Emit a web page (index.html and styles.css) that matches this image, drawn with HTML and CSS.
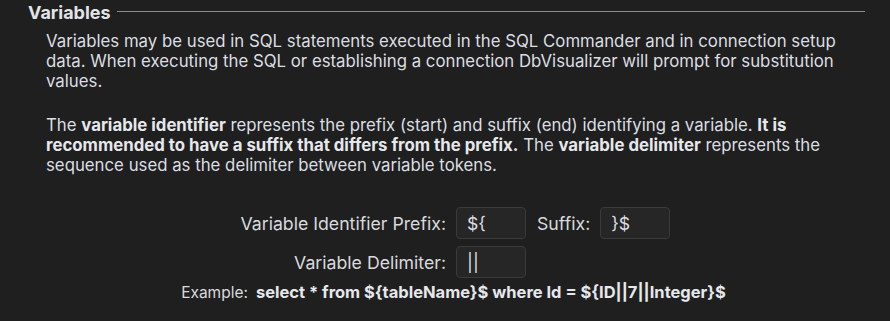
FILE: index.html
```html
<!DOCTYPE html>
<html lang="en">
<head>
    <meta charset="UTF-8">
    <title>Variables</title>
    <link rel="stylesheet" href="styles.css">
</head>
<body>
    <section class="group">
        <div class="group-title">
            <h2>Variables</h2>
            <span class="rule"></span>
        </div>

        <div class="group-body">
            <p>Variables may be used in SQL statements executed in the SQL Commander and in connection setup data. When executing the SQL or establishing a connection DbVisualizer will prompt for substitution values.</p>

            <p>The <b>variable identifier</b> represents the prefix (start) and suffix (end) identifying a variable. <b>It is recommended to have a suffix that differs from the prefix.</b> The <b>variable delimiter</b> represents the sequence used as the delimiter between variable tokens.</p>
        </div>

        <div class="var-form">
            <label class="field-label" for="prefix">Variable Identifier Prefix:</label>
            <input class="field" id="prefix" type="text" value="${">
            <label class="field-label suffix-label" for="suffix">Suffix:</label>
            <input class="field" id="suffix" type="text" value="}$">

            <label class="field-label" for="delim">Variable Delimiter:</label>
            <input class="field" id="delim" type="text" value="||">
        </div>

        <div class="example">
            <span class="example-label">Example:</span><b>select * from ${tableName}$ where Id = ${ID||7||Integer}$</b>
        </div>
    </section>
</body>
</html>
```

FILE: styles.css
```css
* {
    margin: 0;
    padding: 0;
    box-sizing: border-box;
}

body {
    background-color: #1f1f1f;
    color: #dcdee2;
    font-family: Inter, "Noto Sans", sans-serif;
    font-size: 16.8px;
    width: 890px;
    height: 321px;
    overflow: hidden;
}

.group {
    padding: 2px 25px 0 28px;
}

.group-title {
    display: flex;
    align-items: center;
    gap: 6px;
    height: 20px;
}

.group-title h2 {
    font-size: 18px;
    font-weight: 700;
    color: #e2e4e8;
}

.rule {
    flex: 1;
    height: 1px;
    background-color: #8a8a8a;
    margin-top: -2px;
}

.group-body {
    padding: 9px 0 0 18px;
}

.group-body p {
    line-height: 20px;
    margin-bottom: 24px;
}

.group-body p:last-child {
    margin-bottom: 0;
}

.group-body b {
    font-weight: 700;
    color: #e6e8ec;
}

.var-form {
    display: grid;
    grid-template-columns: 418px 70px auto 70px;
    justify-content: start;
    column-gap: 10px;
    row-gap: 7px;
    align-items: center;
    margin-top: 32px;
    font-size: 17.7px;
}

.field-label {
    text-align: right;
    color: #d8dade;
}

.suffix-label {
    padding-left: 1px;
}

.field {
    height: 32px;
    width: 70px;
    background-color: #262626;
    border: 1px solid #3a3a3a;
    border-radius: 4px;
    color: #dcdee2;
    font-family: Inter, "Noto Sans", sans-serif;
    font-size: 17.7px;
    padding: 0 10px;
}

.example {
    text-align: center;
    padding-left: 14px;
    margin-top: 4px;
    color: #d8dade;
    font-size: 16.5px;
}

.example-label {
    font-size: 15.5px;
    margin-right: 8px;
}

.example b {
    font-weight: 700;
    color: #e6e8ec;
}
```
